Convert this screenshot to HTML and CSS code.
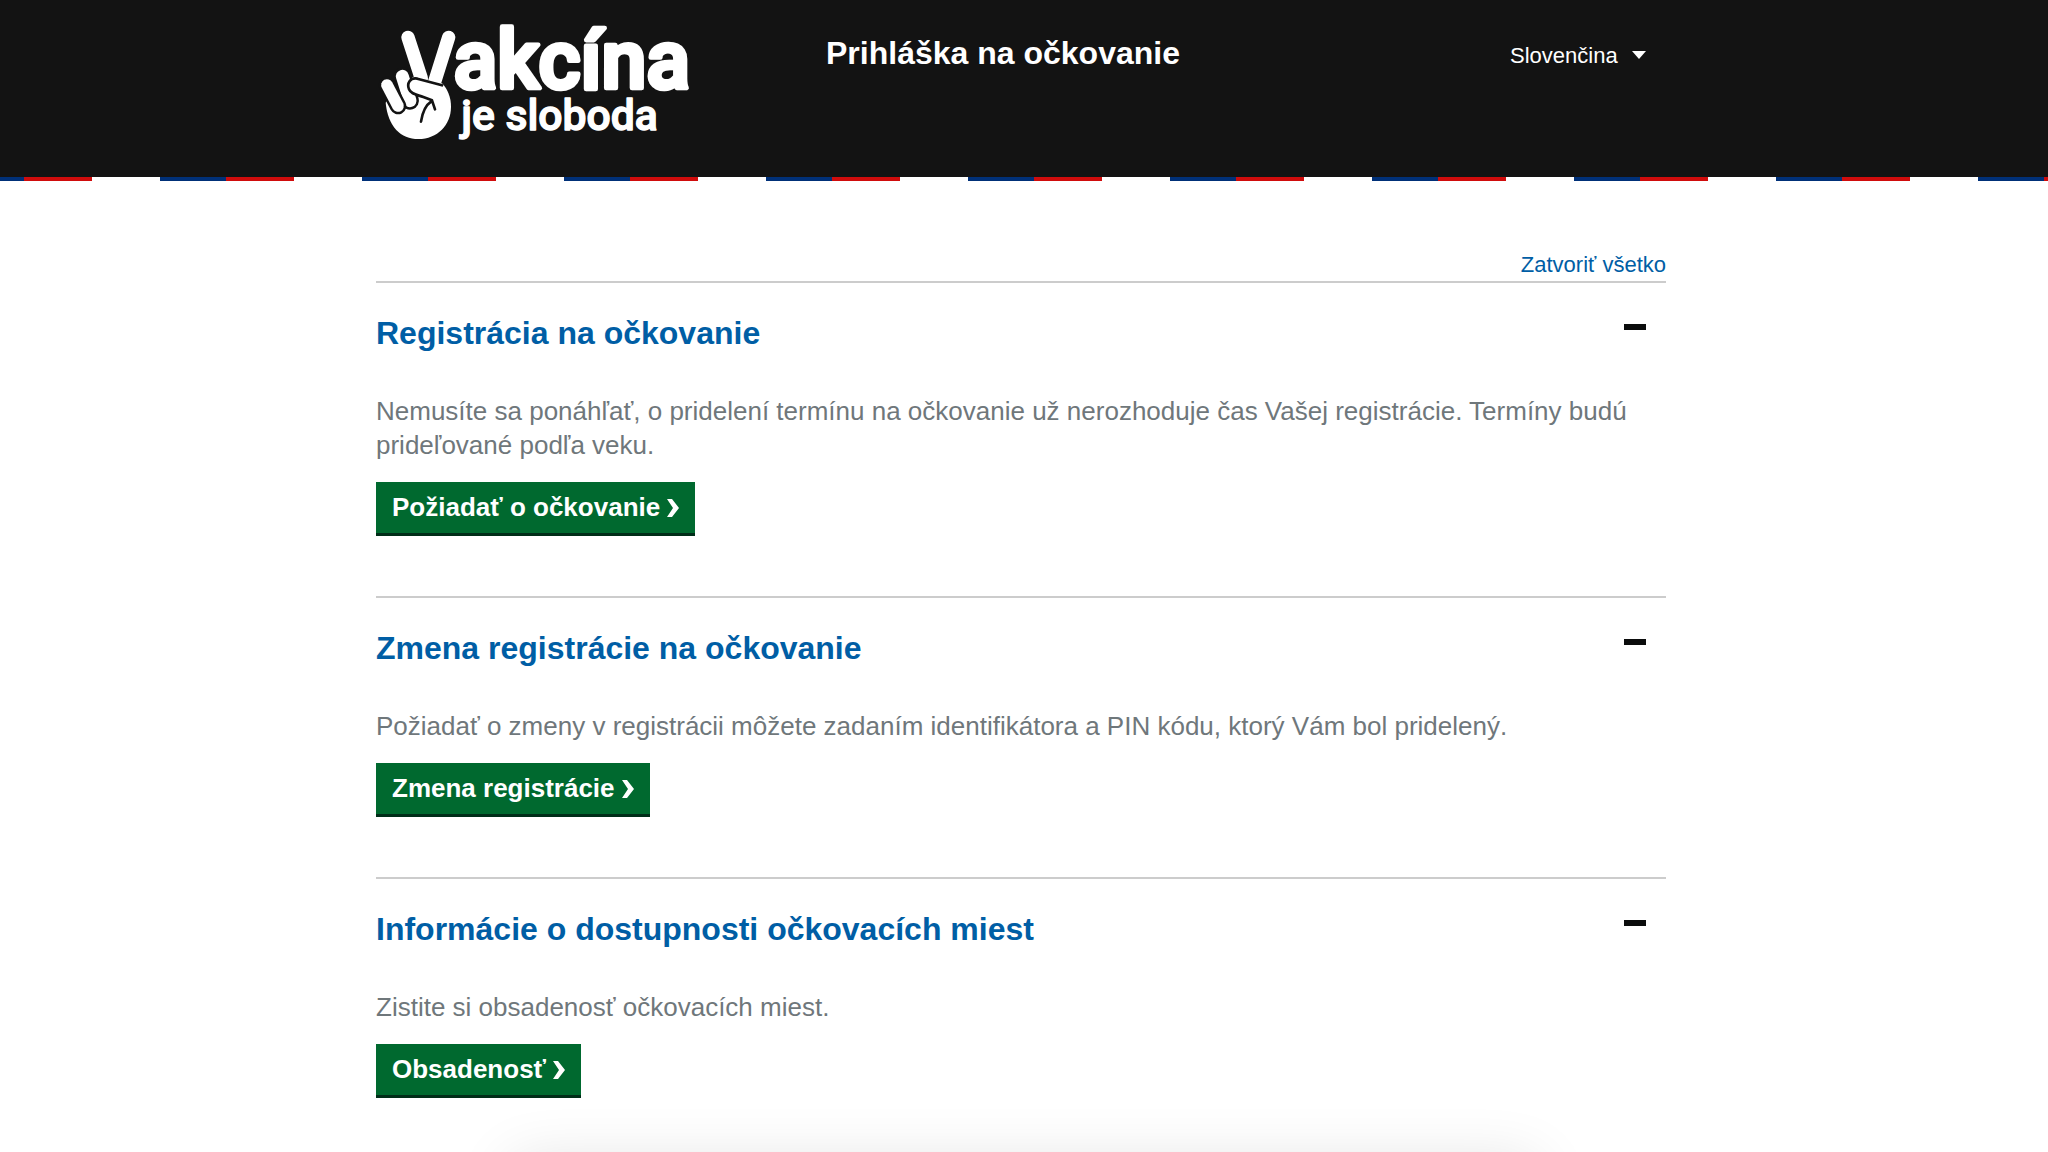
FILE: index.html
```html
<!DOCTYPE html>
<html lang="sk">
<head>
  <meta charset="UTF-8" />
  <meta name="viewport" content="width=device-width, initial-scale=1.0"/>
  <title>Prihláška na očkovanie</title>
  <link rel="stylesheet" href="styles.css">
</head>
<body>
  <header class="header">
    <div class="container header-inner">
      <a href="#" class="logo" aria-label="Vakcína je sloboda">
        <svg viewBox="48 0 960 390" width="320" height="130" fill="none" stroke-linecap="round" stroke-linejoin="round">
          <!-- V fingers and palm -->
          <path d="M144 82L184 205M266 82L224 215" stroke="#fff" stroke-width="40"/>
          <path d="M77 278C84 350 122 387 175 387C232 387 273 345 273 290C273 262 263 238 246 220L160 200L100 240Z" fill="#fff"/>
          <!-- folded fingers -->
          <path d="M127 199L150 272" stroke="#131313" stroke-width="54"/>
          <path d="M127 199L150 272" stroke="#fff" stroke-width="39"/>
          <path d="M81 225L114 288" stroke="#131313" stroke-width="50"/>
          <path d="M81 225L114 288" stroke="#fff" stroke-width="35"/>
          <!-- thumb -->
          <path d="M246 226L172 206C150 202 140 220 147 238C153 253 170 254 190 261L216 271L225 298L250 270Z" fill="#fff"/>
          <path d="M246 226L172 206C150 202 140 220 147 238C153 253 170 254 190 261L216 271L225 298M214 274C196 286 187 308 183 335" stroke="#131313" stroke-width="8"/>
          <text class="logo-big" x="281" y="235">akcína</text>
          <text class="logo-small" x="304" y="359">je sloboda</text>
        </svg>
      </a>
      <h1>Prihláška na očkovanie</h1>
      <div class="language">
        <select id="language" aria-label="Jazyk">
          <option>Slovenčina</option>
          <option>English</option>
        </select>
      </div>
    </div>
  </header>
  <div class="stripe"></div>

  <main class="container">
    <div class="controls">
      <a href="#" id="closeAll">Zatvoriť všetko</a>
    </div>

    <section class="section">
      <h2><button class="toggle" aria-expanded="true">Registrácia na očkovanie</button></h2>
      <div class="content">
        <p>Nemusíte sa ponáhľať, o pridelení termínu na očkovanie už nerozhoduje čas Vašej registrácie. Termíny budú prideľované podľa veku.</p>
        <button class="action">Požiadať o očkovanie
          <svg viewBox="0 0 12 18" width="12" height="18"><path d="M0 0H5L12 9L5 18H0L6 9Z" fill="currentColor"/></svg>
        </button>
      </div>
    </section>

    <section class="section">
      <h2><button class="toggle" aria-expanded="true">Zmena registrácie na očkovanie</button></h2>
      <div class="content">
        <p>Požiadať o zmeny v registrácii môžete zadaním identifikátora a PIN kódu, ktorý Vám bol pridelený.</p>
        <button class="action">Zmena registrácie
          <svg viewBox="0 0 12 18" width="12" height="18"><path d="M0 0H5L12 9L5 18H0L6 9Z" fill="currentColor"/></svg>
        </button>
      </div>
    </section>

    <section class="section">
      <h2><button class="toggle" aria-expanded="true">Informácie o dostupnosti očkovacích miest</button></h2>
      <div class="content">
        <p>Zistite si obsadenosť očkovacích miest.</p>
        <button class="action">Obsadenosť
          <svg viewBox="0 0 12 18" width="12" height="18"><path d="M0 0H5L12 9L5 18H0L6 9Z" fill="currentColor"/></svg>
        </button>
      </div>
    </section>
  </main>

  <div class="bottom-panel"></div>

  <script>
    const toggles = document.querySelectorAll('.toggle');

    function setOpen(toggle, open) {
      toggle.setAttribute('aria-expanded', open);
      toggle.closest('.section').classList.toggle('closed', !open);
    }

    toggles.forEach(toggle => {
      toggle.addEventListener('click', () => {
        setOpen(toggle, toggle.getAttribute('aria-expanded') !== 'true');
      });
    });

    document.getElementById('closeAll').addEventListener('click', (e) => {
      e.preventDefault();
      toggles.forEach(toggle => setOpen(toggle, false));
    });
  </script>
</body>
</html>
```
FILE: styles.css
```css
* {
  margin: 0;
  padding: 0;
  box-sizing: border-box;
}

body {
  font-family: "Liberation Sans", Arial, sans-serif;
  background: #fff;
  color: #6f777b;
  font-size: 26px;
  line-height: 34px;
}

button,
select {
  font-family: inherit;
  border: none;
  cursor: pointer;
}

.container {
  max-width: 1296px;
  margin: 0 auto;
  padding-right: 6px;
}

.header {
  background: #131313;
  color: #fff;
}

.header-inner {
  display: flex;
  align-items: flex-start;
  min-height: 177px;
  padding-top: 10px;
}

.logo svg {
  display: block;
}

.logo text {
  font-family: Roboto, sans-serif;
  font-weight: 500;
  fill: #fff;
  stroke: #fff;
}

.logo-big {
  font-size: 242px;
  stroke-width: 14px;
}

.logo-small {
  font-size: 128px;
  stroke-width: 4px;
}

h1 {
  margin-left: 130px;
  padding-top: 24px;
  font-size: 32px;
  line-height: 38px;
}

.language {
  display: flex;
  align-items: center;
  margin: 30px 20px 0 auto;
}

.language select {
  appearance: none;
  width: 136px;
  height: 30px;
  background: none;
  color: #fff;
  font-size: 22px;
  outline: none;
}

.language::after {
  content: "";
  margin-left: -14px;
  border: 7px solid transparent;
  border-top: 8px solid #fff;
  border-bottom: 0;
  pointer-events: none;
}

.stripe {
  height: 4px;
  background: repeating-linear-gradient(90deg, #003078 0 66px, #d00c0c 66px 134px, #fff 134px 202px);
  background-position: -42px 0;
  background-size: calc(100% + 202px) 100%;
}

.controls {
  padding-top: 68px;
  text-align: right;
  font-size: 22px;
  line-height: 32px;
}

.controls a {
  color: #005ea5;
  text-decoration: none;
}

.section {
  border-top: 2px solid #ccc;
  padding: 31px 0 60px;
}

.section:last-child {
  padding-bottom: 40px;
}

.toggle {
  display: flex;
  justify-content: space-between;
  align-items: flex-start;
  width: 100%;
  padding-right: 20px;
  background: none;
  color: #005ea5;
  font-size: 32px;
  font-weight: 700;
  line-height: 38px;
  text-align: left;
}

/* minus sign */
.toggle::after {
  content: "";
  width: 22px;
  height: 6px;
  margin-top: 10px;
  background: #0b0c0c;
}

.content {
  padding-top: 42px;
}

.closed .content {
  display: none;
}

.action {
  display: flex;
  align-items: center;
  gap: 7px;
  height: 54px;
  margin-top: 20px;
  padding: 0 16px;
  border-bottom: 3px solid #002d18;
  background: #00692f;
  color: #fff;
  font-size: 26px;
  font-weight: 700;
}

/* panel waiting under the bottom edge, only its shadow shows */
.bottom-panel {
  position: fixed;
  bottom: -90px;
  left: 25%;
  right: 25%;
  height: 80px;
  box-shadow: 0 0 60px rgba(0, 0, 0, 0.12);
}
```
